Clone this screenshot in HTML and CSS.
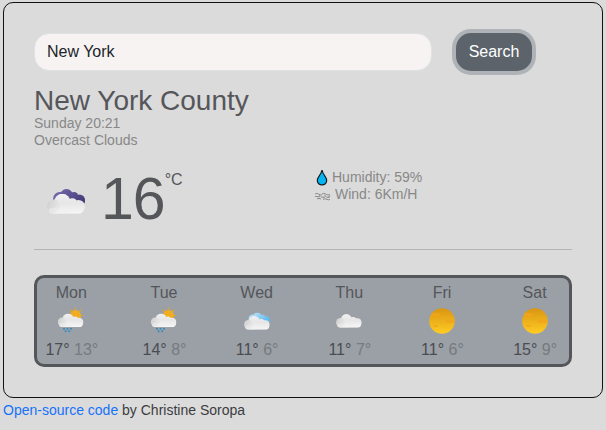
FILE: index.html
```html
<!DOCTYPE html>
<html lang="en">
<head>
<meta charset="utf-8">
<title>Weather</title>
<link rel="stylesheet" href="styles.css">
</head>
<body>
<svg class="defs" width="0" height="0" aria-hidden="true">
  <defs>
    <linearGradient id="white" gradientUnits="userSpaceOnUse" x1="0" y1="0" x2="0" y2="20"><stop offset="0" stop-color="#f1f1f1"/><stop offset=".45" stop-color="#e6e6e6"/><stop offset="1" stop-color="#f6f6f6"/></linearGradient>
    <linearGradient id="puff" x1="0" y1="0" x2="1" y2=".3"><stop offset="0" stop-color="#cfcfcf"/><stop offset="1" stop-color="#e7e7e7"/></linearGradient>
    <linearGradient id="purple" gradientUnits="userSpaceOnUse" x1="8" y1="0" x2="28" y2="15"><stop offset="0" stop-color="#6c62a6"/><stop offset="1" stop-color="#483b78"/></linearGradient>
    <linearGradient id="blue" gradientUnits="userSpaceOnUse" x1="8" y1="0" x2="28" y2="15"><stop offset="0" stop-color="#b9dff5"/><stop offset="1" stop-color="#5cb8ee"/></linearGradient>
    <linearGradient id="sun" x1="0" y1="0" x2="0" y2="1"><stop offset="0" stop-color="#d99512"/><stop offset="1" stop-color="#ffcc24"/></linearGradient>
    <symbol id="cloud" viewBox="0 0 38 20">
      <g fill="url(#white)"><circle cx="15.3" cy="8.2" r="8.2"/><circle cx="25.4" cy="9" r="4.6"/><circle cx="31.4" cy="12.6" r="6.5"/><rect x="2" y="9" width="35" height="11" rx="5.5"/></g>
      <circle cx="6.8" cy="12.4" r="6.7" fill="url(#puff)"/>
      <rect x="1.8" y="14" width="20" height="6" rx="3" fill="#f0f0f0" opacity=".5"/>
    </symbol>
    <symbol id="back" viewBox="0 0 32 15">
      <circle cx="7" cy="10" r="7"/><circle cx="13.5" cy="6.5" r="6.5"/><circle cx="21" cy="7.3" r="4.3"/><circle cx="26.5" cy="10.8" r="5.4"/><rect x="5" y="9" width="26.9" height="6" rx="2"/>
    </symbol>
    <symbol id="rain" viewBox="0 0 40 30">
      <path d="M24.5 1.3V4M18.7 3.8L21 6M30.3 3.8L28 6M32.5 9.5H29.5M31.7 14.5L28.5 12.5" stroke="#dfa32d" stroke-width="1.2"/>
      <circle cx="24.5" cy="9.6" r="5.5" fill="#f1ad20"/>
      <use href="#cloud" x="6.7" y="7.5" width="25.8" height="13.7"/>
      <g fill="#2e8cc0"><circle cx="13" cy="22.7" r="1"/><circle cx="16.5" cy="22.7" r="1"/><circle cx="20" cy="22.7" r="1"/><circle cx="14.6" cy="25.2" r="1"/><circle cx="18.2" cy="25.2" r="1"/></g>
    </symbol>
    <symbol id="clear" viewBox="0 0 40 30">
      <circle cx="20" cy="15" r="12.8" fill="url(#sun)"/>
      <g fill="#f3a51c" opacity=".75"><rect x="9" y="7" width="9" height="3.6" rx="1.5"/><rect x="23" y="13.5" width="9.5" height="3.4" rx="1.5"/><rect x="11" y="19" width="5" height="2" rx="1"/></g>
    </symbol>
  </defs>
</svg>
<main class="card">
  <form class="search">
    <input class="search-input" type="text" value="New York" aria-label="City">
    <button class="search-button" type="button">Search</button>
  </form>
  <h1 class="city">New York County</h1>
  <div class="summary">Sunday 20:21<br>Overcast Clouds</div>
  <section class="current">
    <div class="now">
      <svg class="now-icon" viewBox="0 0 40 28"><use href="#back" x="7" y="2" width="32" height="15" fill="url(#purple)"/><use href="#cloud" x="1" y="6.8" width="38" height="20"/></svg>
      <span class="degrees">16</span><span class="unit">°C</span>
    </div>
    <div class="details">
      <div class="detail"><svg class="drop" viewBox="0 0 12 17"><path d="M6 1Q6.6 4.3 9.2 7.6Q11.2 10.2 10.6 12.3Q9.7 15.8 6 15.8Q2.3 15.8 1.4 12.3Q.8 10.2 2.8 7.6Q5.4 4.3 6 1Z" fill="#08b5f3" stroke="#111c22" stroke-width="1.2"/></svg>Humidity: 59%</div>
      <div class="detail"><svg class="wind" viewBox="0 0 16 9"><path d="M0 2Q2 .8 3.5 2T7 3M7 2Q9 .8 10.5 2T15 2.8M0 4.5H2Q5 5.8 5.2 4Q4.6 2.8 3.7 4.2M6 5Q10 6.4 10.6 4Q9.7 2.8 9 4.4M11 5Q14.6 6.3 15 4.4Q14.3 3.2 13.5 4.7M2 7Q4 5.7 6 7M8 7.5Q10 6 12 7.3T15 7" fill="none" stroke="#777" stroke-width=".8"/></svg>Wind: 6Km/H</div>
    </div>
  </section>
  <hr class="rule">
  <section class="forecast">
    <div class="day"><div>Mon</div><svg class="day-icon"><use href="#rain"/></svg><div class="range"><b>17°</b> <span>13°</span></div></div>
    <div class="day"><div>Tue</div><svg class="day-icon"><use href="#rain"/></svg><div class="range"><b>14°</b> <span>8°</span></div></div>
    <div class="day"><div>Wed</div><svg class="day-icon" viewBox="0 0 40 30"><use href="#back" x="11.3" y="6.5" width="21.6" height="10.1" fill="url(#blue)"/><use href="#cloud" x="7" y="10" width="25.8" height="13.7"/></svg><div class="range"><b>11°</b> <span>6°</span></div></div>
    <div class="day"><div>Thu</div><svg class="day-icon" viewBox="0 0 40 30"><use href="#cloud" x="7" y="8" width="25.8" height="13.7"/></svg><div class="range"><b>11°</b> <span>7°</span></div></div>
    <div class="day"><div>Fri</div><svg class="day-icon"><use href="#clear"/></svg><div class="range"><b>11°</b> <span>6°</span></div></div>
    <div class="day"><div>Sat</div><svg class="day-icon"><use href="#clear"/></svg><div class="range"><b>15°</b> <span>9°</span></div></div>
  </section>
</main>
<footer class="credit"><a href="#">Open-source code</a> by Christine Soropa</footer>
</body>
</html>
```
FILE: styles.css
```css
* { box-sizing: border-box; }
body {
  margin: 0;
  padding: 2px 3px;
  background: #dbdbdb;
  color: #55565a;
  font: 16px/24px "Liberation Sans", Arial, sans-serif;
}
.defs { display: block; }
.card {
  width: 600px;
  height: 396px;
  padding: 30px;
  border: 1px solid #111;
  border-radius: 10px;
}
.search { display: flex; gap: 24px; }
.search-input {
  width: 398px;
  height: 38px;
  padding: 6px 12px;
  border: 1px solid #dee2e6;
  border-radius: 15px;
  background: #f7f3f2;
  color: #212529;
  font: inherit;
}
.search-button {
  width: 76px;
  height: 38px;
  padding: 0;
  border: 0;
  border-radius: 15px;
  background: #5c636a;
  box-shadow: 0 0 0 4px #afb3b7;
  color: #fff;
  font: inherit;
}
.city {
  margin: 13px 0 0;
  font-size: 28px;
  font-weight: 400;
  line-height: 33px;
}
.summary {
  margin-top: -2px;
  color: #888;
  font-size: 14px;
  line-height: 17px;
}
.current { display: flex; height: 100px; }
.now { display: flex; width: 280px; padding: 20px 0 0 12px; }
.now-icon { width: 40px; height: 28px; margin-top: 18px; }
.degrees {
  margin-left: 15px;
  font-size: 59px;
  line-height: 60px;
  letter-spacing: -1px;
}
.unit { margin-top: 1px; line-height: 20px; }
.details { padding-top: 20px; color: #888; font-size: 14px; line-height: 17px; }
.detail { display: flex; align-items: center; height: 17px; }
.drop { width: 12px; height: 17px; margin: 0 4px 0 2px; }
.wind { width: 16px; height: 9px; margin: 4px 4px 0 1px; }
.rule { height: 1px; margin: 0 0 25px; border: 0; background: #b4b4b5; }
.forecast {
  display: flex;
  height: 92px;
  padding: 4px 0 2px;
  border: 3px solid #55565a;
  border-radius: 10px;
  background: #9aa0a6;
  text-align: center;
}
.day { flex: 0 0 92.67px; line-height: 22px; }
.day:first-child { margin-left: -12px; }
.day-icon { display: block; width: 40px; height: 30px; margin: 2px auto 3px; }
.range { padding-left: 1px; }
.range b { font-weight: 400; color: #4b4c50; }
.range span { color: #777a7e; }
.credit { color: #3b3c3f; font-size: 14px; line-height: 24px; }
.credit a { color: #1672fa; text-decoration: none; }
```
